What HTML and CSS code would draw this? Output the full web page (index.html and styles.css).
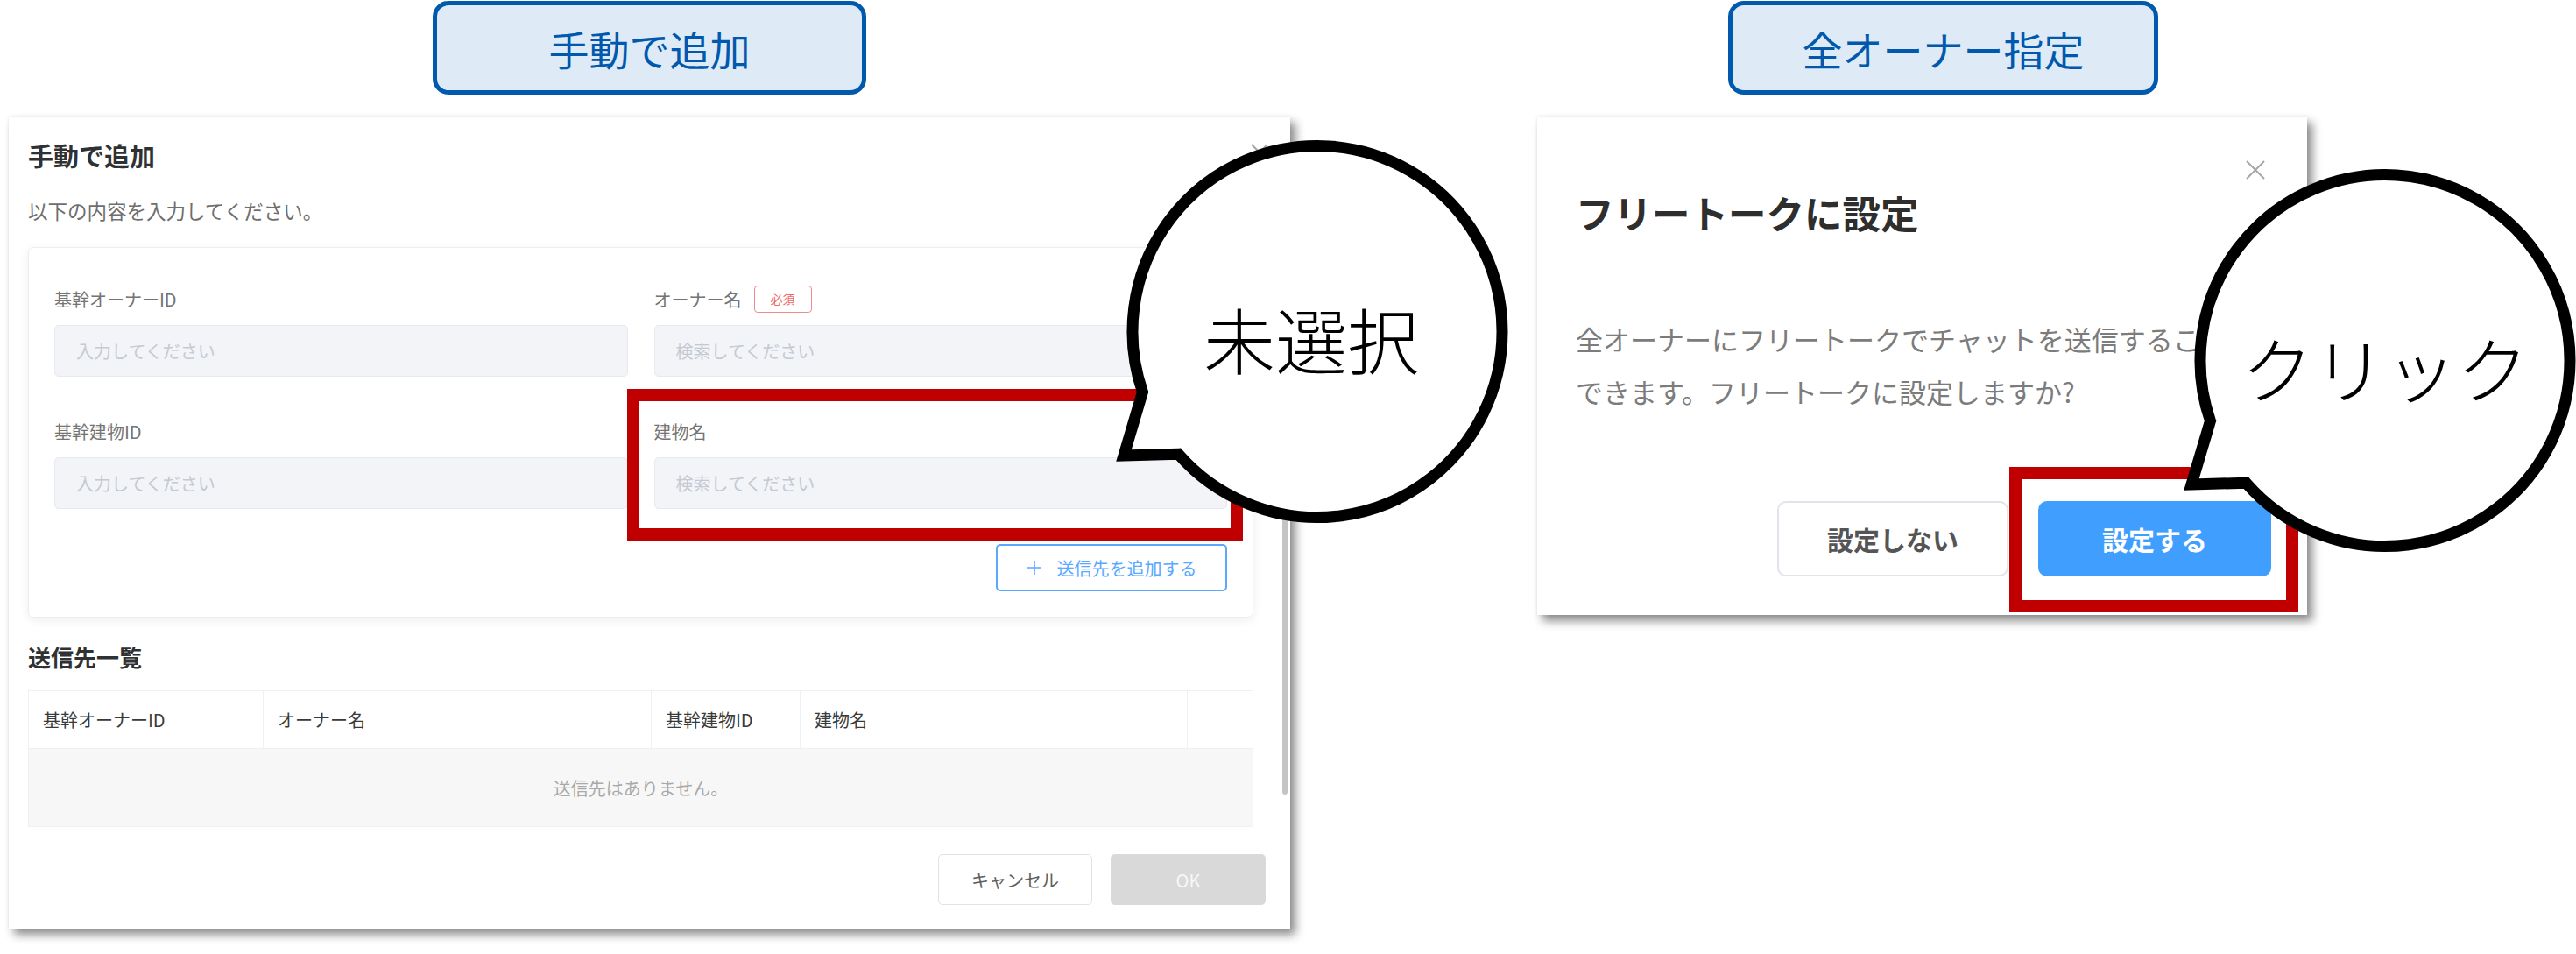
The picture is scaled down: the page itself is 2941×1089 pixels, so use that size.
FILE: index.html
```html
<!DOCTYPE html>
<html lang="ja">
<head>
    <meta charset="UTF-8">
    <meta name="viewport" content="width=device-width, initial-scale=1.0">
    <title>送信先の指定</title>
    <link rel="stylesheet" href="styles.css">
</head>
<body>

<div class="page">

    <!-- 左：手動で追加 -->
    <section class="panel panel-manual">
        <div class="tag">手動で追加</div>

        <div class="dialog dialog-manual">
            <span class="close close-manual">
                <svg viewBox="0 0 22 22" width="22" height="22"><path d="M2 2 L20 20 M20 2 L2 20"/></svg>
            </span>

            <h2 class="dialog-title">手動で追加</h2>
            <p class="dialog-desc">以下の内容を入力してください。</p>

            <div class="form-card">
                <div class="form-grid">
                    <div class="field">
                        <label class="field-label" for="ownerId">基幹オーナーID</label>
                        <input class="field-input" type="text" id="ownerId" placeholder="入力してください">
                    </div>
                    <div class="field">
                        <label class="field-label" for="ownerName">オーナー名<span class="required">必須</span></label>
                        <input class="field-input" type="text" id="ownerName" placeholder="検索してください">
                    </div>
                    <div class="field">
                        <label class="field-label" for="buildingId">基幹建物ID</label>
                        <input class="field-input" type="text" id="buildingId" placeholder="入力してください">
                    </div>
                    <div class="field">
                        <label class="field-label" for="buildingName">建物名</label>
                        <input class="field-input" type="text" id="buildingName" placeholder="検索してください">
                    </div>
                </div>
                <div class="card-actions">
                    <button class="btn-add" type="button">
                        <svg viewBox="0 0 18 18" width="18" height="18"><path d="M9 1 V17 M1 9 H17"/></svg>
                        送信先を追加する
                    </button>
                </div>
            </div>

            <h3 class="list-title">送信先一覧</h3>
            <div class="table">
                <div class="table-head">
                    <div class="th">基幹オーナーID</div>
                    <div class="th">オーナー名</div>
                    <div class="th">基幹建物ID</div>
                    <div class="th">建物名</div>
                    <div class="th"></div>
                </div>
                <div class="table-empty">送信先はありません。</div>
            </div>

            <div class="dialog-footer">
                <button class="btn btn-cancel" type="button">キャンセル</button>
                <button class="btn btn-ok" type="button">OK</button>
            </div>

            <div class="scrollbar"></div>
        </div>
    </section>

    <!-- 右：全オーナー指定 -->
    <section class="panel panel-all">
        <div class="tag tag-all">全オーナー指定</div>

        <div class="dialog dialog-confirm">
            <span class="close close-confirm">
                <svg viewBox="0 0 22 22" width="22" height="22"><path d="M1 1 L21 21 M21 1 L1 21"/></svg>
            </span>

            <h2 class="confirm-title">フリートークに設定</h2>
            <p class="confirm-text">全オーナーにフリートークでチャットを送信することが<br>できます。フリートークに設定しますか?</p>

            <div class="confirm-footer">
                <button class="btn-confirm btn-no" type="button">設定しない</button>
                <button class="btn-confirm btn-yes" type="button">設定する</button>
            </div>
        </div>
    </section>

    <!-- 注釈 -->
    <div class="frame frame-building"></div>
    <div class="frame frame-confirm"></div>

    <div class="bubble bubble-unselected">
        <svg viewBox="0 0 470 460" width="470" height="460">
            <path d="M85.3 368.2 L23 370 L44.5 297.5 A211 212 0 1 1 85.3 368.2 Z"/>
        </svg>
        <div class="bubble-text">未選択</div>
    </div>

    <div class="bubble bubble-click">
        <svg viewBox="0 0 470 460" width="470" height="460">
            <path d="M85.3 368.2 L23 370 L44.5 297.5 A211 212 0 1 1 85.3 368.2 Z"/>
        </svg>
        <div class="bubble-text">クリック</div>
    </div>

</div>

</body>
</html>
```

FILE: styles.css
```css
body {
    margin: 0;
    background-color: #fff;
    font-family: "Noto Sans CJK JP", "Noto Sans", sans-serif;
}
.page {
    position: relative;
    width: 2941px;
    height: 1089px;
    overflow: hidden;
    display: flex;
    align-items: flex-start;
    padding: 1px 0 0 10px;
    box-sizing: border-box;
}

/* 見出しタグ */
.tag {
    box-sizing: border-box;
    width: 495px;
    height: 107px;
    margin: 0 auto;
    display: flex;
    align-items: center;
    justify-content: center;
    border: 5px solid #0059ad;
    border-radius: 18px;
    background-color: #deebf7;
    color: #0059ad;
    font-size: 46px;
    line-height: 1;
}
.tag-all {
    width: 491px;
    margin: 0 0 0 218px;
}

/* ダイアログ共通 */
.panel-manual {
    width: 1463px;
    flex-shrink: 0;
}
.panel-all {
    width: 879px;
    margin-left: 282px;
    flex-shrink: 0;
}
.dialog {
    position: relative;
    box-sizing: border-box;
    margin-top: 25px;
    background-color: #fff;
    box-shadow: 6px 7px 10px rgba(0, 0, 0, 0.45), 0 0 3px rgba(0, 0, 0, 0.08);
}
.close {
    position: absolute;
    display: block;
    line-height: 0;
}
.close path {
    stroke: #a6a6a6;
    stroke-width: 2;
    fill: none;
}

/* 手動で追加 */
.dialog-manual {
    padding: 24px 42px 27px 22px;
}
.close-manual {
    top: 30px;
    right: 24px;
}
.dialog-title {
    margin: 0;
    font-size: 29px;
    line-height: 40px;
    font-weight: bold;
    color: #303133;
}
.dialog-desc {
    margin: 27px 0 0;
    font-size: 22.5px;
    line-height: 32px;
    color: #6e6e6e;
}
.form-card {
    margin-top: 26px;
    padding: 43px 29px 29px;
    border: 1px solid #eceef3;
    border-radius: 6px;
    box-shadow: 0 3px 12px rgba(0, 0, 0, 0.07);
}
.form-grid {
    display: grid;
    grid-template-columns: 1fr 1fr;
    column-gap: 30px;
    row-gap: 47px;
}
.field-label {
    display: flex;
    align-items: center;
    height: 30px;
    margin-bottom: 15px;
    font-size: 20px;
    color: #747474;
}
.required {
    box-sizing: border-box;
    height: 31px;
    margin-left: 14px;
    padding: 0 18px;
    display: flex;
    align-items: center;
    border: 1.5px solid #f08a8a;
    border-radius: 4px;
    font-size: 14px;
    color: #ec6b6b;
}
.field-input {
    display: block;
    box-sizing: border-box;
    width: 100%;
    height: 59px;
    padding: 0 24px;
    border: 1px solid #e6e9ef;
    border-radius: 5px;
    background-color: #f2f4f8;
    font-family: inherit;
    font-size: 20px;
    outline: none;
}
.field-input::placeholder {
    color: #c4c9d2;
}
.card-actions {
    display: flex;
    justify-content: flex-end;
    margin-top: 40px;
}
.btn-add {
    box-sizing: border-box;
    width: 264px;
    height: 54px;
    display: flex;
    align-items: center;
    justify-content: center;
    gap: 17px;
    border: 2px solid #5aa8ff;
    border-radius: 5px;
    background-color: #fff;
    color: #5aa8ff;
    font-family: inherit;
    font-size: 20px;
}
.btn-add path {
    stroke: #5aa8ff;
    stroke-width: 1.6;
    fill: none;
}
.list-title {
    margin: 27px 0 0;
    font-size: 26px;
    line-height: 36px;
    font-weight: bold;
    color: #303133;
}
.table {
    margin-top: 20px;
    border: 1px solid #edf0f5;
}
.table-head {
    display: grid;
    grid-template-columns: 268px 443px 170px 442px 1fr;
    height: 65px;
    border-bottom: 1px solid #edf0f5;
}
.th {
    display: flex;
    align-items: center;
    padding-left: 16px;
    border-right: 1px solid #edf0f5;
    font-size: 20px;
    color: #3a3a3a;
}
.th:last-child {
    border-right: none;
}
.table-empty {
    height: 88px;
    display: flex;
    align-items: center;
    justify-content: center;
    background-color: #f7f7f7;
    font-size: 20px;
    color: #a9a9a9;
}
.dialog-footer {
    display: flex;
    justify-content: flex-end;
    gap: 21px;
    margin: 31px -14px 0 0;
}
.btn {
    box-sizing: border-box;
    width: 176px;
    height: 58px;
    border-radius: 5px;
    font-family: inherit;
    font-size: 20px;
}
.btn-cancel {
    border: 1px solid #dfe2e8;
    background-color: #fff;
    color: #5f5f5f;
}
.btn-ok {
    width: 177px;
    border: none;
    background-color: #d9d9d9;
    color: #f7f7f7;
}
.scrollbar {
    position: absolute;
    top: 67px;
    right: 3px;
    width: 6px;
    height: 707px;
    border-radius: 3px;
    background-color: #c4c4c4;
}

/* 全オーナー指定 */
.dialog-confirm {
    padding: 83px 41px 44px 44px;
}
.close-confirm {
    top: 50px;
    right: 48px;
}
.confirm-title {
    margin: 0;
    font-size: 43.5px;
    line-height: 54px;
    font-weight: bold;
    color: #2e2e2e;
}
.confirm-text {
    margin: 87px 0 0;
    font-size: 31px;
    line-height: 60px;
    color: #7c7c7c;
    white-space: nowrap;
}
.confirm-footer {
    display: flex;
    justify-content: flex-end;
    gap: 34px;
    margin-top: 95px;
}
.btn-confirm {
    box-sizing: border-box;
    height: 86px;
    border-radius: 10px;
    font-family: inherit;
    font-size: 30px;
    font-weight: bold;
}
.btn-no {
    width: 264px;
    border: 2px solid #e1e4ea;
    background-color: #fff;
    color: #555;
}
.btn-yes {
    width: 266px;
    border: none;
    background-color: #409eff;
    color: #fff;
}

/* 注釈の赤枠 */
.frame {
    position: absolute;
    box-sizing: border-box;
    border: 14px solid #c00000;
}
.frame-building {
    left: 716px;
    top: 444px;
    width: 703px;
    height: 173px;
}
.frame-confirm {
    left: 2294px;
    top: 533px;
    width: 330px;
    height: 166px;
}

/* 吹き出し */
.bubble {
    position: absolute;
    width: 470px;
    height: 460px;
}
.bubble svg {
    display: block;
}
.bubble path {
    fill: #fff;
    stroke: #000;
    stroke-width: 13;
    stroke-linejoin: miter;
}
.bubble-text {
    position: absolute;
    left: 0;
    top: 0;
    width: 488px;
    height: 472px;
    display: flex;
    align-items: center;
    justify-content: center;
    font-size: 82px;
    font-weight: 300;
    line-height: 1;
    color: #000;
    white-space: nowrap;
}
.bubble-unselected {
    left: 1260px;
    top: 150px;
}
.bubble-unselected .bubble-text {
    width: 474px;
}
.bubble-click {
    left: 2479px;
    top: 183px;
}
```
